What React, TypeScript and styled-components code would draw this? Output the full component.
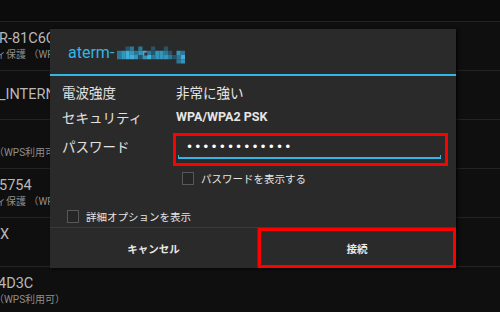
import React from 'react';
import styled, { createGlobalStyle } from 'styled-components';

const GlobalStyle = createGlobalStyle`
  html, body {
    margin: 0;
    padding: 0;
    background: #0f0f0f;
  }
  body {
    font-family: Roboto, "Noto Sans CJK JP", sans-serif;
    -webkit-font-smoothing: antialiased;
  }
`;

const Screen = styled.div`
  position: relative;
  width: 500px;
  height: 312px;
  overflow: hidden;
  background: #0f0f0f;
`;

const TopStrip = styled.div`
  height: 21px;
  background: #0c0c0c;
`;

const ListItem = styled.div`
  height: 48px;
  border-top: 1px solid #232323;
  display: flex;
  flex-direction: column;
  justify-content: center;
  overflow: hidden;
  white-space: nowrap;
`;

const ItemTitle = styled.div<{ $shift: number }>`
  margin-left: ${(p) => p.$shift}px;
  font-size: 14.5px;
  line-height: 18px;
  color: #b8b8b8;
`;

const ItemSub = styled.div<{ $shift: number }>`
  margin-left: ${(p) => p.$shift}px;
  font-size: 10px;
  line-height: 14px;
  color: #8e8e8e;
`;

const Dialog = styled.div`
  position: absolute;
  left: 50px;
  top: 29px;
  width: 406px;
  height: 239px;
  background: #2a2a2a;
  box-shadow: 2px 1px 3px rgba(0, 0, 0, 0.7);
  display: flex;
  flex-direction: column;
`;

const TitleBar = styled.div`
  height: 47px;
  border-bottom: 2px solid #33b5e5;
  display: flex;
  align-items: center;
  padding-left: 18px;
  padding-top: 2px;
  box-sizing: border-box;
  font-size: 16px;
  color: #33b5e5;
`;

const Mosaic = styled.svg`
  display: block;
  margin-left: 3px;
  margin-top: 5px;
`;

const Body = styled.div`
  flex: 1;
  padding: 3px 0 0 12px;
  display: flex;
  flex-direction: column;
`;

const InfoRow = styled.div`
  height: 25px;
  display: flex;
  align-items: center;
`;

const Label = styled.div`
  width: 114px;
  font-size: 13.5px;
  color: #e2e2e2;
`;

const Value = styled.div<{ $strong?: boolean }>`
  font-size: ${(p) => (p.$strong ? '12.5px' : '13.5px')};
  font-weight: ${(p) => (p.$strong ? 700 : 400)};
  color: #e6e6e6;
`;

const PasswordRow = styled.div`
  margin-top: 4px;
  height: 33px;
  display: flex;
  align-items: center;
`;

const PasswordLabel = styled(Label)`
  width: 111px;
  padding-bottom: 8px;
`;

const Highlight = styled.div`
  width: 275px;
  height: 33px;
  box-sizing: border-box;
  border: 3px solid #ff0000;
  padding: 0 4px 0 2px;
`;

const EditField = styled.div`
  height: 21px;
  border-bottom: 2px solid #33b5e5;
  position: relative;
  display: flex;
  align-items: center;
  padding-left: 8px;

  &::before,
  &::after {
    content: '';
    position: absolute;
    bottom: -2px;
    width: 1px;
    height: 4px;
    background: #33b5e5;
  }
  &::before {
    left: 0;
  }
  &::after {
    right: 0;
  }
`;

const Dots = styled.span`
  font-family: "DejaVu Sans", sans-serif;
  font-size: 12px;
  letter-spacing: 1.1px;
  color: #ffffff;
  padding-top: 1px;
`;

const CheckRow = styled.label<{ $indent: number; $top: number }>`
  display: flex;
  align-items: center;
  margin-left: ${(p) => p.$indent}px;
  margin-top: ${(p) => p.$top}px;
  height: 13px;
  font-size: 10.5px;
  color: #e6e6e6;
`;

const Box = styled.span`
  width: 12px;
  height: 13px;
  box-sizing: border-box;
  border: 1px solid #585858;
  background: #262626;
  margin-right: 7px;
`;

const Footer = styled.div`
  height: 40px;
  border-top: 1px solid #3a3a3a;
  display: flex;
`;

const Button = styled.div<{ $highlight?: boolean; $width: number }>`
  width: ${(p) => p.$width}px;
  box-sizing: border-box;
  display: flex;
  align-items: center;
  justify-content: center;
  font-size: 10.5px;
  font-weight: 600;
  color: #e8e8e8;
  border: ${(p) => (p.$highlight ? '3px solid #ff0000' : 'none')};
  border-right: ${(p) => (p.$highlight ? '3px solid #ff0000' : '1px solid #3a3a3a')};
`;

const mosaicRows = [
  '..12.2..1..1....',
  '2343234213321.32',
  '2344313423332124',
  '..............23',
];

const shades: Record<string, string> = {
  '1': '#24566b',
  '2': '#2b7896',
  '3': '#3395bb',
  '4': '#3dafd8',
};

function BlurredName() {
  const cell = 4.2;
  return (
    <Mosaic width={68} height={18} viewBox="0 0 67.2 16.8">
      {mosaicRows.flatMap((row, y) =>
        row.split('').map((c, x) =>
          c === '.' ? null : (
            <rect key={`${x}-${y}`} x={x * cell} y={y * cell} width={cell} height={cell} fill={shades[c]} />
          )
        )
      )}
      <rect x={27} y={6} width={3} height={3} fill="#4a2a2e" />
    </Mosaic>
  );
}

const NBSP = '\u00a0';

const networks = [
  { title: 'R-81C6C', titleShift: -1, sub: 'ィ保護 （WPS利用可）', subShift: -4 },
  { title: '_INTERNET', titleShift: -1 },
  { title: NBSP, titleShift: 0, sub: '（WPS利用可）', subShift: -6 },
  { title: '5754', titleShift: -1, sub: 'ィ保護 （WPS利用可）', subShift: -4 },
  { title: 'X', titleShift: 0, sub: NBSP, subShift: 0 },
  { title: '4D3C', titleShift: -2, sub: '（WPS利用可）', subShift: -6 },
];

export default function App() {
  return (
    <>
      <GlobalStyle />
      <Screen>
        <TopStrip />
        {networks.map((n, i) => (
          <ListItem key={i}>
            <ItemTitle $shift={n.titleShift}>{n.title}</ItemTitle>
            {n.sub && <ItemSub $shift={n.subShift}>{n.sub}</ItemSub>}
          </ListItem>
        ))}

        <Dialog>
          <TitleBar>
            aterm-
            <BlurredName />
          </TitleBar>
          <Body>
            <InfoRow>
              <Label>電波強度</Label>
              <Value>非常に強い</Value>
            </InfoRow>
            <InfoRow>
              <Label>セキュリティ</Label>
              <Value $strong>WPA/WPA2 PSK</Value>
            </InfoRow>
            <PasswordRow>
              <PasswordLabel>パスワード</PasswordLabel>
              <Highlight>
                <EditField>
                  <Dots>•••••••••••••</Dots>
                </EditField>
              </Highlight>
            </PasswordRow>
            <CheckRow $indent={120} $top={6}>
              <Box />
              パスワードを表示する
            </CheckRow>
            <CheckRow $indent={5} $top={25}>
              <Box />
              詳細オプションを表示
            </CheckRow>
          </Body>
          <Footer>
            <Button $width={208}>キャンセル</Button>
            <Button $width={198} $highlight>
              接続
            </Button>
          </Footer>
        </Dialog>
      </Screen>
    </>
  );
}
